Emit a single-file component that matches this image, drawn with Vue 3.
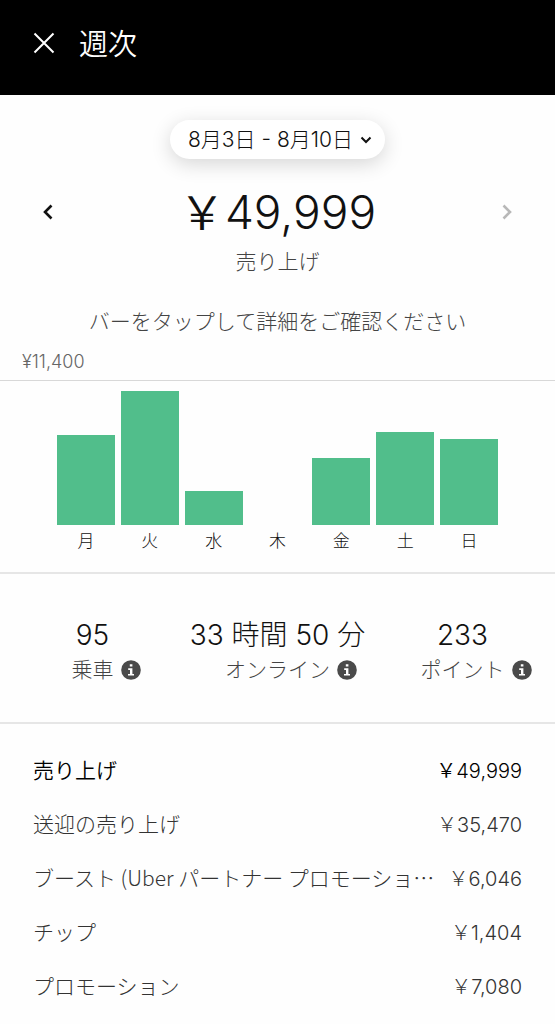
<script setup>
import { computed, ref } from 'vue';

const CHART_HEIGHT = 134;
const MAX_EARNING = 11400;

// full-width yen sign
const YEN = '\uFFE5';

const days = [
  { label: '月', amount: 7650 },
  { label: '火', amount: 11400 },
  { label: '水', amount: 2900 },
  { label: '木', amount: 0 },
  { label: '金', amount: 5700 },
  { label: '土', amount: 7950 },
  { label: '日', amount: 7350 },
];

const stats = [
  { value: '95', label: '乗車' },
  { value: '33 時間 50 分', label: 'オンライン' },
  { value: '233', label: 'ポイント' },
];

const rows = [
  { label: '売り上げ', value: '49,999', total: true },
  { label: '送迎の売り上げ', value: '35,470' },
  { label: 'ブースト (Uber パートナー プロモーショ…', value: '6,046' },
  { label: 'チップ', value: '1,404' },
  { label: 'プロモーション', value: '7,080' },
];

const selected = ref(null);

const bars = computed(() =>
  days.map((day) => ({
    ...day,
    height: `${Math.round((day.amount / MAX_EARNING) * CHART_HEIGHT)}px`,
  })),
);
</script>

<template>
  <div class="page" lang="ja">
    <header class="header">
      <button type="button" class="icon-button" aria-label="閉じる">
        <svg width="22" height="22" viewBox="0 0 22 22" fill="none" stroke="currentColor" stroke-width="2">
          <path d="M1.5 1.5l19 19M20.5 1.5l-19 19" />
        </svg>
      </button>
      <h1 class="header__title">週次</h1>
    </header>

    <main>
      <section class="summary">
        <button type="button" class="period">
          <span>8月3日 - 8月10日</span>
          <svg width="12" height="8" viewBox="0 0 12 8" fill="none" stroke="currentColor" stroke-width="2">
            <path d="M1.5 1.5L6 6l4.5-4.5" />
          </svg>
        </button>
        <div class="summary__week">
          <button type="button" class="icon-button" aria-label="前の週">
            <svg width="11" height="16" viewBox="0 0 11 16" fill="none" stroke="currentColor" stroke-width="2.6">
              <path d="M9.5 1.5L3 8l6.5 6.5" />
            </svg>
          </button>
          <p class="summary__amount">{{ YEN }}49,999</p>
          <button type="button" class="icon-button" aria-label="次の週" disabled>
            <svg width="11" height="16" viewBox="0 0 11 16" fill="none" stroke="currentColor" stroke-width="2.6">
              <path d="M1.5 1.5L8 8l-6.5 6.5" />
            </svg>
          </button>
        </div>
        <p class="summary__label">売り上げ</p>
        <p class="summary__hint">バーをタップして詳細をご確認ください</p>
      </section>

      <section class="chart">
        <p class="chart__max">¥11,400</p>
        <div class="chart__plot">
          <button
            v-for="(bar, i) in bars"
            :key="bar.label"
            type="button"
            class="day"
            :aria-pressed="selected === i"
            @click="selected = i"
          >
            <span class="day__bar" :style="{ height: bar.height }" />
            <span class="day__label">{{ bar.label }}</span>
          </button>
        </div>
      </section>

      <section class="stats">
        <div v-for="stat in stats" :key="stat.label" class="stat">
          <p class="stat__value">{{ stat.value }}</p>
          <div class="stat__caption">
            <span class="stat__label">{{ stat.label }}</span>
            <button type="button" class="icon-button stat__info" :aria-label="`${stat.label}の詳細`">
              <svg width="20" height="20" viewBox="0 0 20 20">
                <circle cx="10" cy="10" r="9.8" fill="#4a4a4a" />
                <path d="M8.8 4.2h2.6v2.4H8.8zM7.2 8.2h4.2v5.7H13v1.7H7v-1.7h2v-4H7.2z" fill="#fff" />
              </svg>
            </button>
          </div>
        </div>
      </section>

      <table class="breakdown">
        <tbody>
          <tr v-for="row in rows" :key="row.label" :class="{ total: row.total }">
            <th scope="row">{{ row.label }}</th>
            <td>{{ YEN }}{{ row.value }}</td>
          </tr>
        </tbody>
      </table>
    </main>
  </div>
</template>

<style>
body {
  margin: 0;
  background: #fefefe;
}
</style>

<style scoped>
.page {
  color: #111;
  font-family: Inter, 'Noto Sans CJK JP', sans-serif;
  font-size: 21px;
  font-weight: 300;
  line-height: 32px;
}

h1,
p {
  margin: 0;
  font-weight: inherit;
}

button {
  padding: 0;
  border: 0;
  background: none;
  color: inherit;
  font: inherit;
  cursor: pointer;
}

.icon-button {
  display: flex;
}

.icon-button:disabled {
  color: #b8b8b8;
  cursor: default;
}

.header {
  display: flex;
  align-items: center;
  gap: 24px;
  padding: 19px 33px 28px;
  background: #000;
  color: #fff;
}

.header__title {
  padding-top: 4px;
  font-size: 29px;
  font-weight: 350;
  line-height: 44px;
}

.summary {
  display: flex;
  flex-direction: column;
  align-items: center;
  padding-top: 25px;
  text-align: center;
}

.period {
  display: flex;
  align-items: center;
  gap: 7px;
  padding: 4px 13px 3px 18px;
  border-radius: 20px;
  background: #fff;
  box-shadow: 0 5px 20px rgba(0, 0, 0, 0.16);
}

.summary__week {
  display: flex;
  align-items: center;
  justify-content: space-between;
  align-self: stretch;
  margin: 21px 0 2px;
  padding: 0 42px;
}

.summary__amount {
  font-size: 46px;
  font-weight: 350;
  line-height: 64px;
}

.summary__label,
.summary__hint {
  color: #444;
}

.summary__hint {
  margin-top: 28px;
}

.chart {
  border-bottom: 2px solid #e6e6e6;
}

.chart__max {
  padding: 12px 22px 6px;
  border-bottom: 1px solid #d8d8d8;
  color: #666;
  font-size: 18px;
  line-height: 24px;
}

.chart__plot {
  display: grid;
  grid-template-columns: repeat(7, 1fr);
  gap: 6px;
  padding: 10px 57px 19px;
}

.day {
  display: flex;
  flex-direction: column;
  justify-content: flex-end;
}

.day__bar {
  width: 100%;
  background: #51be8b;
}

.day__label {
  width: 100%;
  padding-top: 4px;
  font-size: 17px;
  line-height: 24px;
}

.stats {
  display: grid;
  grid-template-columns: repeat(3, 1fr);
  padding: 43px 0 36px;
  border-bottom: 2px solid #e6e6e6;
  text-align: center;
}

.stat__value {
  padding-bottom: 1px;
  font-size: 28px;
  line-height: 36px;
  white-space: nowrap;
}

/* the icon hangs off the right so the label stays centred under its value */
.stat__caption {
  display: grid;
  grid-template-columns: 1fr auto 1fr;
  align-items: center;
  column-gap: 7px;
  color: #444;
}

.stat__label {
  grid-column: 2;
}

.stat__info {
  justify-self: start;
}

.breakdown {
  width: 100%;
  padding: 18px 33px 0;
  border-spacing: 0;
  color: #333;
}

.breakdown th,
.breakdown td {
  padding: 11px 0 9px;
  font-weight: inherit;
  vertical-align: baseline;
  white-space: nowrap;
}

.breakdown th {
  font-family: 'Noto Sans CJK JP', sans-serif;
  text-align: left;
}

.breakdown td {
  font-size: 20px;
  text-align: right;
}

.breakdown .total {
  color: #000;
  font-weight: 350;
}
</style>
